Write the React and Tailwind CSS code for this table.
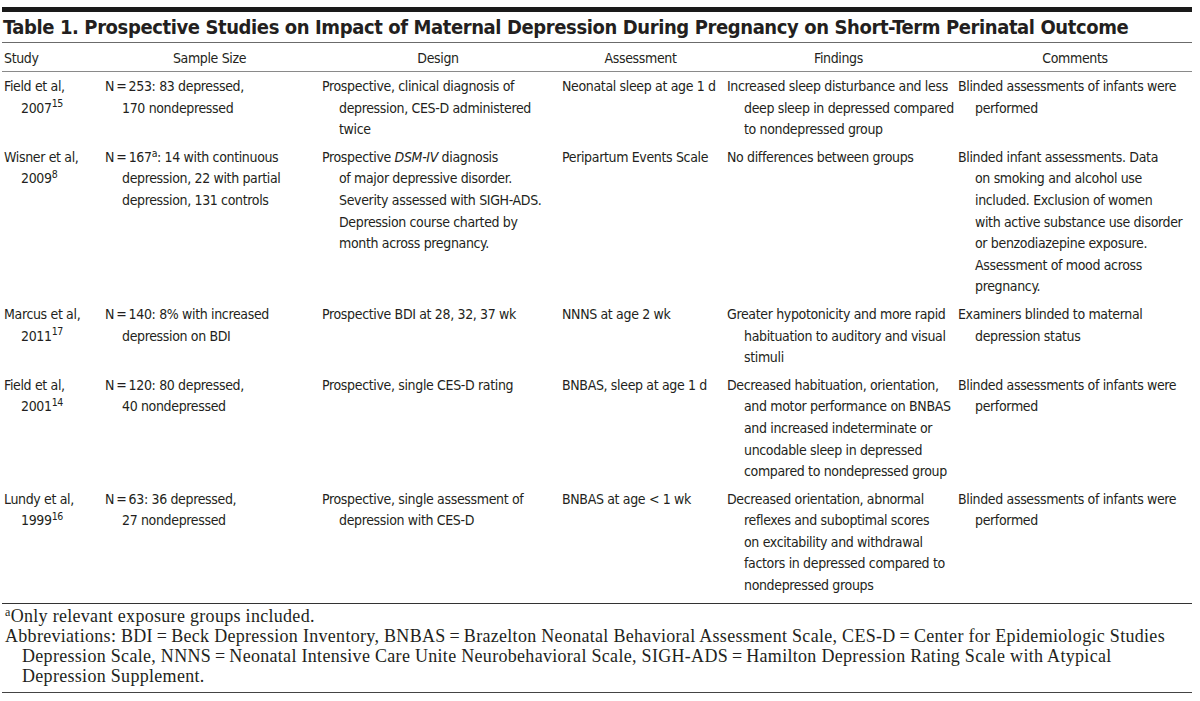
import React from 'react';

const cols = "grid grid-cols-[103px_217px_240px_165px_231px_234px]";

const eq = "\u2009=\u2009";

const rows = [
  [
    ["Field et al,", <>2007<sup>15</sup></>],
    [`N${eq}253: 83 depressed,`, "170 nondepressed"],
    ["Prospective, clinical diagnosis of", "depression, CES-D administered", "twice"],
    ["Neonatal sleep at age 1 d"],
    ["Increased sleep disturbance and less", "deep sleep in depressed compared", "to nondepressed group"],
    ["Blinded assessments of infants were", "performed"],
  ],
  [
    ["Wisner et al,", <>2009<sup>8</sup></>],
    [<>N{eq}167<sup>a</sup>: 14 with continuous</>, "depression, 22 with partial", "depression, 131 controls"],
    [<>Prospective <i>DSM-IV</i> diagnosis</>, "of major depressive disorder.", "Severity assessed with SIGH-ADS.", "Depression course charted by", "month across pregnancy."],
    ["Peripartum Events Scale"],
    ["No differences between groups"],
    ["Blinded infant assessments. Data", "on smoking and alcohol use", "included. Exclusion of women", "with active substance use disorder", "or benzodiazepine exposure.", "Assessment of mood across", "pregnancy."],
  ],
  [
    ["Marcus et al,", <>2011<sup>17</sup></>],
    [`N${eq}140: 8% with increased`, "depression on BDI"],
    ["Prospective BDI at 28, 32, 37 wk"],
    ["NNNS at age 2 wk"],
    ["Greater hypotonicity and more rapid", "habituation to auditory and visual", "stimuli"],
    ["Examiners blinded to maternal", "depression status"],
  ],
  [
    ["Field et al,", <>2001<sup>14</sup></>],
    [`N${eq}120: 80 depressed,`, "40 nondepressed"],
    ["Prospective, single CES-D rating"],
    ["BNBAS, sleep at age 1 d"],
    ["Decreased habituation, orientation,", "and motor performance on BNBAS", "and increased indeterminate or", "uncodable sleep in depressed", "compared to nondepressed group"],
    ["Blinded assessments of infants were", "performed"],
  ],
  [
    ["Lundy et al,", <>1999<sup>16</sup></>],
    [`N${eq}63: 36 depressed,`, "27 nondepressed"],
    ["Prospective, single assessment of", "depression with CES-D"],
    [<>BNBAS at age {"<"} 1 wk</>],
    ["Decreased orientation, abnormal", "reflexes and suboptimal scores", "on excitability and withdrawal", "factors in depressed compared to", "nondepressed groups"],
    ["Blinded assessments of infants were", "performed"],
  ],
];

function Cell({ lines, first }) {
  return (
    <div className={`whitespace-nowrap ${first ? "pl-[2px]" : ""}`}>
      {lines.map((line, i) => (
        <div key={i} className={i > 0 ? "pl-[17px]" : ""}>{line}</div>
      ))}
    </div>
  );
}

export default function App() {
  return (
    <div className="w-[1200px] h-[701px] bg-white text-[#231f20] overflow-hidden">
      <div className="ml-[2px] w-[1190px] pt-[7px]">
        <div className="h-[5px] bg-[#1a1a1a]" />
        <div className="mt-[3px] border-b-[1.5px] border-[#6b6b6b] pb-[3px] pl-[1px] text-[20px] leading-[24px] tracking-[-0.4px] font-bold font-['Liberation_Sans_Narrow','DejaVu_Sans_Condensed','Liberation_Sans',sans-serif]">
          Table 1. Prospective Studies on Impact of Maternal Depression During Pregnancy on Short-Term Perinatal Outcome
        </div>

        <div className="font-['Liberation_Sans_Narrow','DejaVu_Sans_Condensed','Liberation_Sans',sans-serif] text-[14px] tracking-[-0.35px]">
          {/* header */}
          <div className={`${cols} pt-[5px] pb-[3px] leading-[20px] border-b-[1.5px] border-[#8a8a8a]`}>
            <div className="pl-[2px]">Study</div>
            <div className="text-center pr-[8px]">Sample Size</div>
            <div className="text-center pr-[8px]">Design</div>
            <div className="text-center pr-[8px]">Assessment</div>
            <div className="text-center pr-[8px]">Findings</div>
            <div className="text-center">Comments</div>
          </div>

          {/* body */}
          <div className="pt-[1px] pb-[3px] leading-[21.6px] border-b border-[#333]">
            {rows.map((row, r) => (
              <div key={r} className={`${cols} py-[3px]`}>
                {row.map((lines, c) => (
                  <Cell key={c} lines={lines} first={c === 0} />
                ))}
              </div>
            ))}
          </div>
        </div>

        {/* footnotes */}
        <div className="pt-[2px] pb-[6px] border-b border-[#444] text-[18px] leading-[20px] tracking-[0.3px] font-['Liberation_Serif',serif] whitespace-nowrap">
          <div className="pl-[3px]"><sup className="text-[12px]">a</sup>Only relevant exposure groups included.</div>
          <div className="pl-[3px]">Abbreviations: BDI{eq}Beck Depression Inventory, BNBAS{eq}Brazelton Neonatal Behavioral Assessment Scale, CES-D{eq}Center for Epidemiologic Studies</div>
          <div className="pl-[20px]">Depression Scale, NNNS{eq}Neonatal Intensive Care Unite Neurobehavioral Scale, SIGH-ADS{eq}Hamilton Depression Rating Scale with Atypical</div>
          <div className="pl-[20px]">Depression Supplement.</div>
        </div>
      </div>
    </div>
  );
}
